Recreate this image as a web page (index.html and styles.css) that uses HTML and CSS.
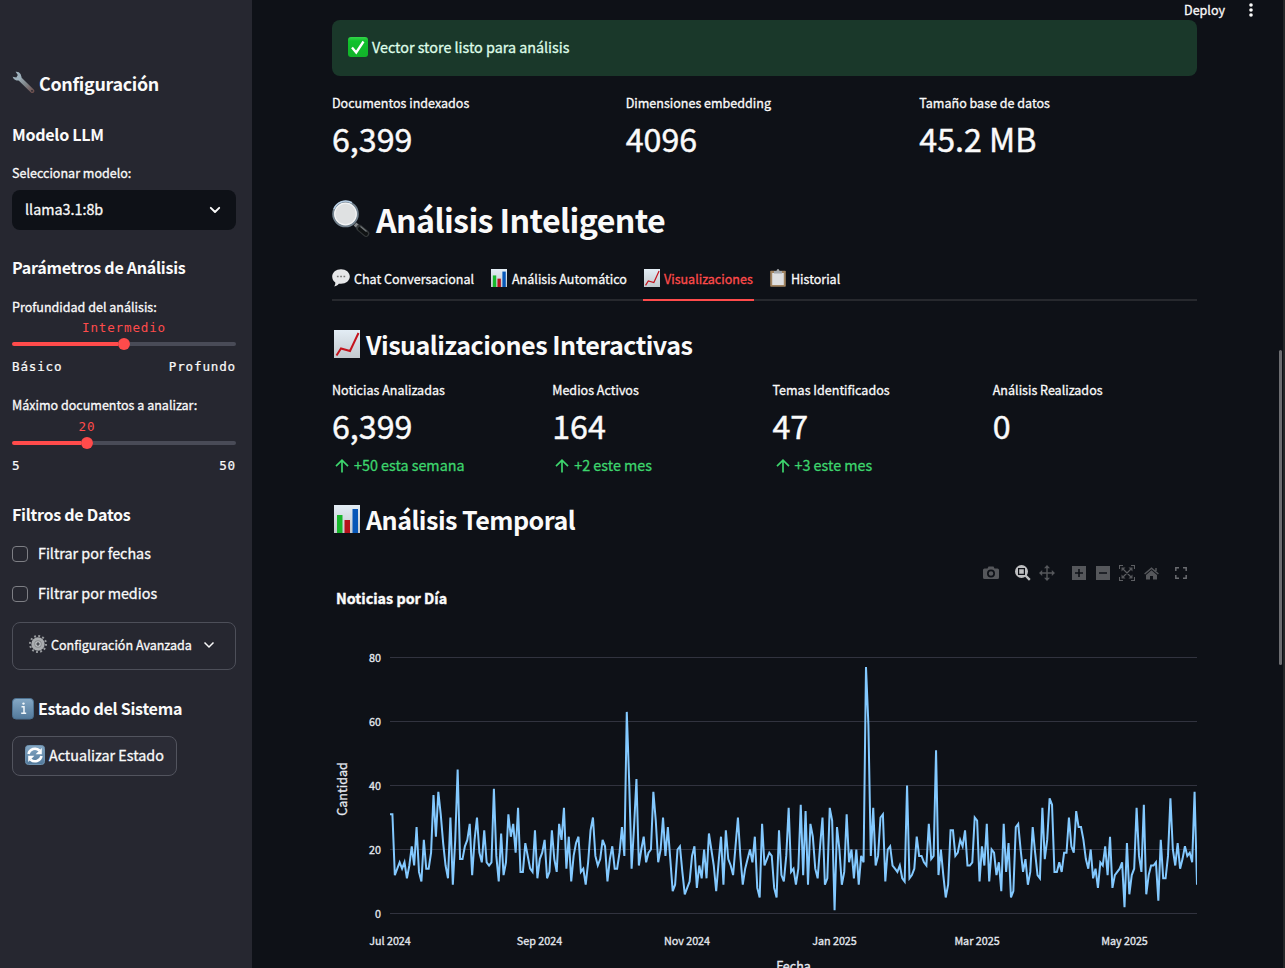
FILE: index.html
```html
<!DOCTYPE html>
<html lang="es">
<head>
<meta charset="utf-8">
<title>Análisis Inteligente</title>
<link rel="stylesheet" href="styles.css">
</head>
<body>
<svg class="defs" width="0" height="0" aria-hidden="true">
  <defs>
    <linearGradient id="paper" x1="0" y1="0" x2="0" y2="1"><stop offset="0" stop-color="#e3edf5"/><stop offset="1" stop-color="#c3c9ce"/></linearGradient>
    <linearGradient id="blue" x1="0" y1="0" x2="0" y2="1"><stop offset="0" stop-color="#86a9c6"/><stop offset="1" stop-color="#52799b"/></linearGradient>
    <linearGradient id="green" x1="0" y1="0" x2="0" y2="1"><stop offset="0" stop-color="#35d74b"/><stop offset=".2" stop-color="#10c22c"/><stop offset="1" stop-color="#12b32a"/></linearGradient>
    <linearGradient id="steel" gradientUnits="userSpaceOnUse" x1="5" y1="5" x2="21" y2="21"><stop offset="0" stop-color="#a9bac4"/><stop offset=".5" stop-color="#80888c"/><stop offset="1" stop-color="#6d4f4d"/></linearGradient>
    <symbol id="i-up" viewBox="0 0 26 28" preserveAspectRatio="none"><rect width="26" height="28" fill="url(#paper)"/><path d="M2.500 25.500 7 18.500l9 2.500L24.500 3" fill="none" stroke="#c4141d" stroke-width="2"/></symbol>
    <symbol id="i-bars" viewBox="0 0 26 28" preserveAspectRatio="none"><rect width="26" height="28" fill="url(#paper)"/><path d="M3 10h5.500v18H3z" fill="#17b82b"/><path d="M10.500 15h5.500v13h-5.500z" fill="#b5121b"/><path d="M18.500 4H24v24h-5.500z" fill="#0757b8"/></symbol>
  </defs>
</svg>
<div class="app">
  <aside class="sidebar">
    <h2 class="side-title">
      <svg width="23" height="23" viewBox="0 0 23 23"><path d="M7 7 20.300 20" stroke="url(#steel)" stroke-width="4" stroke-linecap="round"/><path d="M3.600.8a5 5 0 0 1 5 7.600A5 5 0 0 1 .6 5.800l3.700.6L5.800 4z" fill="#9db0bb"/><circle cx="20" cy="19.800" r=".9" fill="#262730"/></svg>
      <span>Configuración</span>
    </h2>
    <h3 class="side-head head-model"><span>Modelo LLM</span></h3>
    <label class="label label-select">Seleccionar modelo:</label>
    <div class="select"><span>llama3.1:8b</span>
      <svg width="12" height="8" viewBox="0 0 12 8"><path d="m1.800 1.800 4.200 4.200 4.200-4.200" fill="none" stroke="#fafafa" stroke-width="1.900" stroke-linecap="round" stroke-linejoin="round"/></svg>
    </div>
    <h3 class="side-head head-params"><span>Parámetros de Análisis</span></h3>
    <label class="label label-depth">Profundidad del análisis:</label>
    <div class="slider slider-depth">
      <div class="slider-value"><span>Intermedio</span></div>
      <div class="track"><i class="fill"></i><i class="thumb"></i><i class="rest"></i></div>
      <div class="ticks"><span>Básico</span><span>Profundo</span></div>
    </div>
    <label class="label label-docs">Máximo documentos a analizar:</label>
    <div class="slider slider-docs">
      <div class="slider-value"><span>20</span></div>
      <div class="track"><i class="fill"></i><i class="thumb"></i><i class="rest"></i></div>
      <div class="ticks"><span>5</span><span>50</span></div>
    </div>
    <h3 class="side-head head-filters"><span>Filtros de Datos</span></h3>
    <div class="check check-dates"><i class="box"></i><span>Filtrar por fechas</span></div>
    <div class="check check-media"><i class="box"></i><span>Filtrar por medios</span></div>
    <div class="expander">
      <svg class="gear" width="18" height="18" viewBox="0 0 18 18"><circle cx="9" cy="9" r="8" fill="none" stroke="#989b9e" stroke-width="2" stroke-dasharray="1.900 2.289"/><circle cx="9" cy="9" r="5.200" fill="#85888b" stroke="#a9acaf" stroke-width="3"/><circle cx="9" cy="9" r="2.200" fill="#4b4e54" stroke="#c4c7ca" stroke-width="1.100"/></svg>
      <span>Configuración Avanzada</span>
      <svg class="chev" width="12" height="8" viewBox="0 0 12 8"><path d="m1.500 1.500 4.500 4.500 4.500-4.500" fill="none" stroke="#fafafa" stroke-width="1.500"/></svg>
    </div>
    <h3 class="side-head head-state">
      <svg width="22" height="22" viewBox="0 0 22 22"><rect x=".5" y=".5" width="21" height="20.500" rx="3.500" fill="url(#blue)" stroke="#4c7190"/><path d="M9.500 8.700h2.500v6.500M9.200 15.200h5" fill="none" stroke="#f2f7fb" stroke-width="1.500"/><circle cx="11.500" cy="5.600" r="1.200" fill="#f2f7fb"/></svg>
      <span>Estado del Sistema</span>
    </h3>
    <button class="button" type="button">
      <svg width="20" height="20" viewBox="0 0 20 20"><rect x=".5" y=".5" width="19" height="19" rx="3" fill="url(#blue)" stroke="#6f93b1"/><path d="M3.500 9A6.600 6.600 0 0 1 14.500 5.500M16.500 11A6.600 6.600 0 0 1 5.500 14.500" fill="none" stroke="#fff" stroke-width="2.500"/><path d="M16.800 3v6.200h-6.200zM3.200 17v-6.200h6.200z" fill="#fff"/></svg>
      <span>Actualizar Estado</span>
    </button>
  </aside>

  <main class="main">
    <header class="topbar"><span>Deploy</span>
      <svg width="4" height="14" viewBox="0 0 4 14" fill="#fafafa"><circle cx="2" cy="2" r="1.800"/><circle cx="2" cy="7" r="1.800"/><circle cx="2" cy="12" r="1.800"/></svg>
    </header>
    <div class="content">
      <div class="alert">
        <svg width="20" height="20" viewBox="0 0 20 20"><rect width="20" height="20" rx="3" fill="url(#green)"/><path d="m4 10.500 4.200 5L15.500 4.500" fill="none" stroke="#fff" stroke-width="2.300"/></svg>
        <span>Vector store listo para análisis</span>
      </div>
      <section class="metrics three">
        <div class="metric"><div class="label">Documentos indexados</div><div class="value">6,399</div></div>
        <div class="metric"><div class="label">Dimensiones embedding</div><div class="value">4096</div></div>
        <div class="metric"><div class="label">Tamaño base de datos</div><div class="value">45.2 MB</div></div>
      </section>
      <h1 class="page-title">
        <svg width="38" height="38" viewBox="0 0 38 38"><path d="m23 24 5 4.500" stroke="#85898c" stroke-width="4"/><path d="m27.500 28 6.500 5.500" stroke="#34383a" stroke-width="6.600" stroke-linecap="round"/><path d="m28 28.800 6 5" stroke="#0f1213" stroke-width="4" stroke-linecap="round"/><path d="m28.500 26.500 6 5" stroke="#72777a" stroke-width="1.200"/><circle cx="13.500" cy="14" r="12.200" fill="#dfe1e2" stroke="#758490" stroke-width="2.200"/><circle cx="13.500" cy="14" r="10.800" fill="none" stroke="#f4f5f6" stroke-width="1.200"/><path d="M2 9A12.500 12.500 0 0 1 20 2.800" fill="none" stroke="#b7cee4" stroke-width="1.600"/></svg>
        <span>Análisis Inteligente</span>
      </h1>
      <nav class="tabs">
        <div class="tab tab-chat"><svg width="18" height="18" viewBox="0 0 18 18"><path d="M9 .3c5 0 8.800 3.200 8.800 7.300S14 14.800 9 14.800l-2.200-.1c-1 1.300-2.500 2.400-4.500 2.700.9-1.300 1.100-2.300 1-3.800C1.300 12.200.2 10.200.2 7.600.2 3.500 4 .3 9 .3z" fill="#e6e7e9"/><path d="M4.900 7.500h1.700M8.200 7.500h1.700M11.500 7.500h1.700" stroke="#777" stroke-width="1.600"/></svg><span>Chat Conversacional</span></div>
        <div class="tab tab-auto"><svg width="16" height="18"><use href="#i-bars" width="16" height="18"/></svg><span>Análisis Automático</span></div>
        <div class="tab tab-vis active"><svg width="16" height="18"><use href="#i-up" width="16" height="18"/></svg><span>Visualizaciones</span></div>
        <div class="tab tab-hist"><svg width="16" height="18" viewBox="0 0 16 18"><rect x=".2" y="1.800" width="15.600" height="16" rx=".8" fill="#a08360"/><path d="M2.200 4h11.600v12H2.200z" fill="#dedfe1"/><path d="M4 4.500V2h2.500l.6-1.700h1.800L9.500 2H12v2.500z" fill="#a4a8ac"/></svg><span>Historial</span></div>
      </nav>
      <h2 class="section-title first">
        <svg width="26" height="28"><use href="#i-up" width="26" height="28"/></svg><span>Visualizaciones Interactivas</span>
      </h2>
      <section class="metrics four">
        <div class="metric"><div class="label">Noticias Analizadas</div><div class="value">6,399</div><div class="delta"><svg width="14" height="14" viewBox="0 0 14 14"><path d="M7 13.500V1.500M1 7.200 7 1.200l6 6"/></svg><span>+50 esta semana</span></div></div>
        <div class="metric"><div class="label">Medios Activos</div><div class="value">164</div><div class="delta"><svg width="14" height="14" viewBox="0 0 14 14"><path d="M7 13.500V1.500M1 7.200 7 1.200l6 6"/></svg><span>+2 este mes</span></div></div>
        <div class="metric"><div class="label">Temas Identificados</div><div class="value">47</div><div class="delta"><svg width="14" height="14" viewBox="0 0 14 14"><path d="M7 13.500V1.500M1 7.200 7 1.200l6 6"/></svg><span>+3 este mes</span></div></div>
        <div class="metric"><div class="label">Análisis Realizados</div><div class="value">0</div></div>
      </section>
      <h2 class="section-title second">
        <svg width="26" height="28"><use href="#i-bars" width="26" height="28"/></svg><span>Análisis Temporal</span>
      </h2>
      <div class="modebar">
        <svg class="camera" width="16" height="16" viewBox="0 0 16 16"><path fill-rule="evenodd" d="M1.500 3.500h3L5.500 1.500h5l1 2h3A1.500 1.500 0 0 1 16 5v7.500a1.500 1.500 0 0 1-1.500 1.500h-13A1.500 1.500 0 0 1 0 12.500V5a1.500 1.500 0 0 1 1.500-1.500zM8 4.500a4 4 0 1 0 0 8 4 4 0 0 0 0-8zm0 1.700a2.300 2.300 0 1 1 0 4.600 2.300 2.300 0 0 1 0-4.600z"/></svg>
        <svg class="zoom" width="16" height="16" viewBox="0 0 16 16"><path d="m10.500 10.500 4.300 4.300" stroke="#bebfc1" stroke-width="2.400"/><path fill-rule="evenodd" d="M6.500 0a6.500 6.500 0 1 1 0 13 6.500 6.500 0 0 1 0-13zM3 3v7h7V3zm1.200 1.200h4.600v4.600H4.200z"/></svg>
        <svg class="pan" width="16" height="16" viewBox="0 0 16 16"><path d="M8 2v12M2 8h12" stroke="#55575b" stroke-width="1.400"/><path d="m8 0 3 3.200H5zM8 16l3-3.200H5zM0 8l3.200-3v6zM16 8l-3.200-3v6z"/></svg>
        <svg class="plus" width="14" height="14" viewBox="0 0 14 14"><path fill-rule="evenodd" d="M0 0h14v14H0zM6.200 3v3.200H3v1.600h3.200V11h1.600V7.800H11V6.200H7.800V3z"/></svg>
        <svg class="minus" width="14" height="14" viewBox="0 0 14 14"><path fill-rule="evenodd" d="M0 0h14v14H0zM3 6.200v1.600h8V6.200z"/></svg>
        <svg class="auto" width="16" height="16" viewBox="0 0 16 16"><path d="M.5 4V.5H4M12 .5h3.500V4M15.500 12v3.500H12M4 15.500H.5V12M4 4l8 8M12 4l-8 8" fill="none" stroke="#5c5e62" stroke-width="1.100"/><path d="M2.500 2.500h4l-4 4zM13.500 2.500v4l-4-4zM13.500 13.500h-4l4-4zM2.500 13.500v-4l4 4z"/></svg>
        <svg class="home" width="15" height="13" viewBox="0 0 15 13"><path d="M7.500 3.200 13 8v4.500H9V9H6v3.500H2V8z"/><path d="m.6 7 6.900-5.800L14.400 7M12 1v3" fill="none" stroke="#55575b" stroke-width="1.500"/></svg>
        <svg class="full" width="12" height="12" viewBox="0 0 12 12"><path d="M.8 4V.8H4M8 .8h3.200V4M11.200 8v3.200H8M4 11.200H.8V8" fill="none" stroke="#6a6c70" stroke-width="1.500"/></svg>
      </div>
      <h4 class="chart-title">Noticias por Día</h4>
      <svg class="chart" id="chart" width="865" height="358" viewBox="332 610 865 358">
        <g class="grid"><path d="M390 657.500H1197M390 721.500H1197M390 785.500H1197M390 849.500H1197M390 913.500H1197"/></g>
        <path class="series" id="series"/>
        <g class="ticks-y"><text x="381" y="662">80</text><text x="381" y="726">60</text><text x="381" y="790">40</text><text x="381" y="854">20</text><text x="381" y="918">0</text></g>
        <g class="ticks-x"><text x="390" y="945">Jul 2024</text><text x="539.500" y="945">Sep 2024</text><text x="687" y="945">Nov 2024</text><text x="834.500" y="945">Jan 2025</text><text x="977" y="945">Mar 2025</text><text x="1124.500" y="945">May 2025</text></g>
        <text class="axis" transform="translate(347 789) rotate(-90)">Cantidad</text>
        <text class="axis" x="793.500" y="971">Fecha</text>
      </svg>
    </div>
    <i class="scroll-thumb"></i>
    <i class="edge"></i>
  </main>
</div>
<script src="chart.js"></script>
</body>
</html>
```
FILE: chart.js
```js
// Articles per day, 1 Jul 2024 to 31 May 2025.
const daily = [
  31,31,12,14,16,14,16,11,15,21,15,27,13,10,23,14,14,19,37,24,38,31,22,15,11,30,9,23,45,17,
  17,21,23,28,12,23,30,19,16,26,16,15,16,39,18,10,25,12,16,31,24,28,19,33,13,13,22,18,14,13,
  26,11,17,19,23,11,13,26,17,13,28,23,33,14,24,10,18,22,24,13,14,9,16,26,30,18,15,17,23,21,
  10,17,21,14,14,19,27,18,63,41,14,27,42,15,20,24,16,19,20,38,29,16,20,30,18,27,17,7,9,20,
  21,13,6,8,10,18,21,8,15,11,20,11,25,20,15,7,16,24,9,26,17,15,12,21,30,18,9,14,17,20,
  16,24,8,5,28,15,17,19,18,8,5,26,12,10,18,33,13,14,9,14,34,12,32,9,28,24,14,11,21,30,
  9,11,33,29,1,27,20,9,13,31,16,20,11,20,9,18,16,77,59,18,33,15,18,30,31,10,20,21,15,14,
  13,15,11,10,40,11,12,14,24,18,18,16,15,28,17,18,51,12,20,12,5,9,26,26,18,19,23,21,26,15,
  15,16,30,29,10,21,15,28,10,20,19,12,16,7,28,13,22,5,7,27,28,20,13,17,9,13,27,19,12,11,
  33,17,23,36,34,13,13,16,13,19,19,30,21,19,32,27,27,23,17,14,20,11,14,8,16,15,21,12,24,8,
  12,13,14,16,2,22,6,12,14,33,18,13,34,6,12,15,15,16,4,23,11,11,18,36,20,15,22,14,17,21,
  18,19,16,38,9
];
const left = 390, width = 807, baseline = 913.5, unit = 3.2;
const step = width / (daily.length - 1);
document.getElementById('series').setAttribute('d', 'M' + daily
  .map((n, i) => (left + i * step).toFixed(2) + ' ' + (baseline - n * unit).toFixed(2))
  .join('L'));
```
FILE: styles.css
```css
* { box-sizing: border-box; }
body { margin: 0; background: #0e1117; color: #fafafa; font-family: "Noto Sans CJK SC", "Noto Sans", sans-serif; font-size: 14.33px; line-height: 20px; overflow: hidden; -webkit-text-stroke: .3px currentColor; }
.defs { position: absolute; }
h1, h2, h3, h4 { margin: 0; font-weight: 700; -webkit-text-stroke: 0; }
svg { flex: none; display: block; }
span { white-space: nowrap; }
.app { display: flex; height: 968px; }

.sidebar { width: 252px; flex: none; padding: 69px 16px 0 12px; background: #262730; display: flex; flex-direction: column; }
.side-title { height: 30px; display: flex; align-items: center; gap: 4px; font-size: 17.9px; letter-spacing: -.3px; }
.side-title svg { margin-top: -3px; }
.side-head { height: 30px; display: flex; align-items: center; gap: 4px; font-size: 16.1px; letter-spacing: -.29px; }
.side-title span, .side-head span, .select span, .check span, .expander span, .button span, .alert span, .delta span, .section-title span { padding-bottom: 2px; }
.head-model { margin-top: 21px; }
.head-params { margin-top: 23px; }
.head-filters { margin-top: 25px; }
.head-state { margin-top: 24px; }
.label { font-size: 12.54px; line-height: 20px; height: 20px; white-space: nowrap; }
.label-select { margin-top: 13px; }
.label-depth { margin-top: 14px; }
.label-docs { margin-top: 19px; }
.select { margin-top: 7px; height: 40px; padding: 0 15px 0 13px; border-radius: 8px; background: #0e1117; display: flex; align-items: center; justify-content: space-between; }
.slider { font-family: "DejaVu Sans Mono", monospace; font-size: 12.6px; line-height: 22px; letter-spacing: .82px; -webkit-text-stroke: 0; }
.slider-docs { margin-top: 1px; }
.slider-value { height: 20px; color: #ff4b4b; display: flex; justify-content: center; }
.slider-docs .slider-value { width: 150px; }
.track { height: 14px; display: flex; align-items: center; }
.fill { width: 106px; height: 4px; background: #ff4b4b; border-radius: 2px 0 0 2px; }
.slider-docs .fill { width: 69px; }
.thumb { width: 12px; height: 12px; border-radius: 50%; background: #ff4b4b; }
.rest { flex: 1; height: 4px; background: #494b57; border-radius: 0 2px 2px 0; }
.ticks { margin-top: 5px; height: 20px; display: flex; justify-content: space-between; -webkit-text-stroke: .2px currentColor; }
.check { height: 20px; display: flex; align-items: center; gap: 10px; }
.check-dates { margin-top: 14px; }
.check-media { margin-top: 20px; }
.box { width: 16px; height: 16px; border: 1px solid #7d7e84; border-radius: 4px; }
.expander { margin-top: 18px; height: 48px; padding: 0 16px; border: 1px solid #4d4f59; border-radius: 8px; display: flex; align-items: center; font-size: 12.54px; }
.expander span { margin-left: 4px; }
.expander svg { margin-top: -2px; }
.expander .gear { margin-top: -4px; }
.expander .chev { margin-left: 11px; }
.button { margin-top: 12px; width: 165px; height: 40px; padding: 0 12px; border: 1px solid #52545e; border-radius: 8px; background: #2b2c36; color: #fafafa; font: inherit; display: flex; align-items: center; gap: 4px; }
.button svg, .alert svg { margin-top: -2px; }

.main { position: relative; flex: 1; padding: 0 88px 0 80px; min-width: 0; }
.topbar { height: 20px; margin-right: -56px; display: flex; align-items: center; justify-content: flex-end; gap: 24px; font-size: 12.54px; }
.content { display: flex; flex-direction: column; }
.alert { height: 56px; padding: 0 16px; border-radius: 8px; background: #1a382a; color: #dffde9; display: flex; align-items: center; gap: 4px; }
.metrics { display: grid; column-gap: 16px; }
.three { margin-top: 17px; grid-template-columns: repeat(3, 1fr); }
.four { margin-top: 15px; grid-template-columns: repeat(4, 1fr); }
.value { margin-top: 3px; height: 48px; line-height: 44px; font-size: 32.2px; -webkit-text-stroke: .45px currentColor; }
.delta { margin-top: 5px; height: 20px; padding-left: 3px; display: flex; align-items: center; gap: 5px; color: #3dd56d; }
.delta path { fill: none; stroke: #3dd56d; stroke-width: 1.7; }
.page-title { margin-top: 32px; height: 50px; display: flex; align-items: center; gap: 6px; font-size: 32.2px; letter-spacing: -.62px; }
.page-title svg { margin-top: -4px; }
.page-title span { padding-bottom: 4px; }
.tabs { margin-top: 15px; height: 40px; display: flex; gap: 16px; border-bottom: 2px solid #27292e; font-size: 12.54px; }
.tab { height: 40px; padding-bottom: 2px; display: flex; align-items: center; gap: 4px; border-bottom: 2px solid transparent; }
.tab svg { margin-top: -2px; }
.tab-chat { width: 142px; }
.tab-auto { width: 137px; padding-left: 1px; gap: 5px; }
.tab-vis { width: 111px; padding-left: 1px; }
.tab-hist { width: 70px; gap: 5px; }
.tab.active { color: #ff4b4b; border-color: #ff4b4b; }
.section-title { height: 40px; padding-left: 2px; display: flex; align-items: center; gap: 6px; font-size: 25.1px; letter-spacing: -.51px; }
.section-title svg { margin-top: -2px; }
.first { margin-top: 24px; }
.second { margin-top: 24px; }
.modebar { height: 16px; margin-top: 25px; padding-left: 651px; display: flex; align-items: center; fill: #55575b; }
.modebar .zoom { margin-left: 16px; fill: #bebfc1; }
.modebar .pan { margin-left: 8px; }
.modebar .plus { margin-left: 17px; }
.modebar .minus { margin-left: 10px; }
.modebar .auto { margin-left: 9px; }
.modebar .home { margin-left: 9px; }
.modebar .full { margin-left: 16px; }
.chart-title { margin: 7px 0 0 4px; height: 20px; font-size: 14.33px; -webkit-text-stroke: .4px currentColor; }
.chart { margin-top: 2px; }
.grid path { stroke: #31333f; stroke-width: 1; }
.series { fill: none; stroke: #83c9ff; stroke-width: 2; }
.chart text { fill: #e6eaf1; font-size: 10.75px; stroke: none; -webkit-text-stroke: 0; stroke: #e6eaf1; stroke-width: .3px; }
.ticks-y text { text-anchor: end; }
.ticks-x text { text-anchor: middle; }
.chart .axis { font-size: 12.54px; text-anchor: middle; }
.scroll-thumb { position: absolute; right: 3px; top: 350px; width: 3px; height: 315px; border-radius: 2px; background: #6c6d71; }
.edge { position: absolute; right: 0; top: 0; width: 2px; height: 968px; background: #242628; }
```
